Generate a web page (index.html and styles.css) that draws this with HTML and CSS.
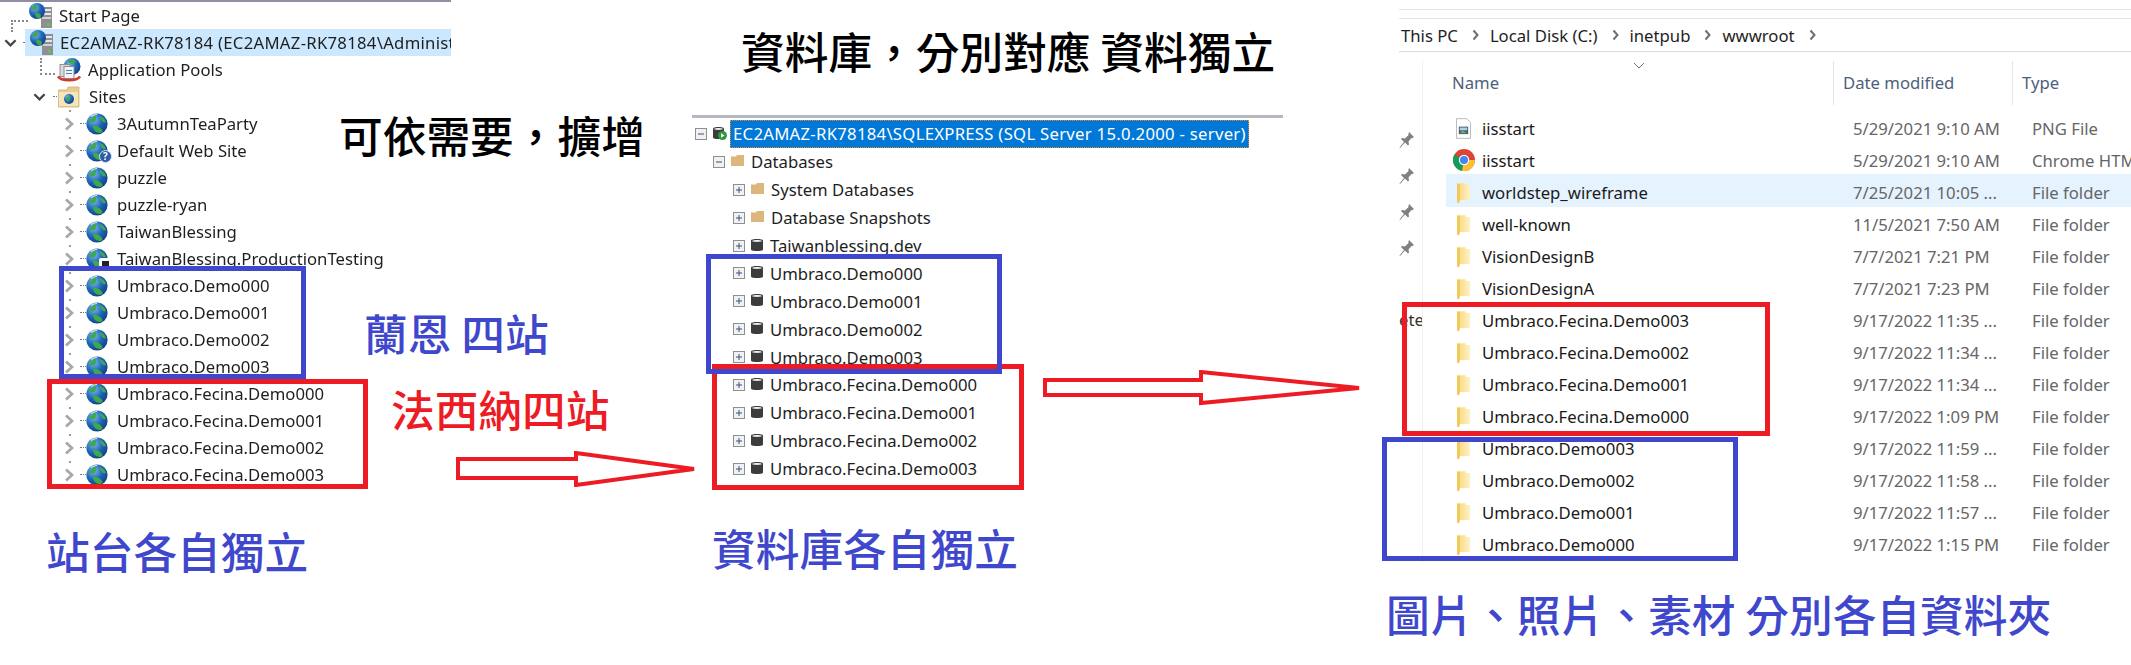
FILE: index.html
```html
<!DOCTYPE html>
<html lang="zh-Hant">
<head>
<meta charset="utf-8">
<title>Umbraco sites</title>
<link rel="stylesheet" href="styles.css">
</head>
<body>
<svg class="defs" width="0" height="0" aria-hidden="true">
  <defs>
    <radialGradient id="gb" cx="35%" cy="30%" r="75%"><stop offset="0" stop-color="#7db8ea"/><stop offset=".55" stop-color="#1c66b8"/><stop offset="1" stop-color="#123f86"/></radialGradient>
    <linearGradient id="fy" x1="0" x2="1"><stop offset="0" stop-color="#f8d67a"/><stop offset="1" stop-color="#fff2c4"/></linearGradient>
    <symbol id="globe" viewBox="0 0 22 22">
      <circle cx="11" cy="11" r="10.6" fill="url(#gb)"/>
      <path d="M3 7c3-1 4-4 7-5 1 2-1 3 0 5-1 2-3 3-4 2-1 1-2 0-3-2zM14 3c3 1 5 3 6 6-2 1-3 0-4-1-1-2-3-3-2-5zM7 13c3-1 7 1 9 4 1 1 0 3-2 3-4 0-7-3-7-7z" fill="#3ea84a"/>
      <path d="M5 3.5C7 2 9 1.500 11 1.500" stroke="#cfe6f8" stroke-width="1.200" fill="none"/>
    </symbol>
    <symbol id="server" viewBox="0 0 24 27">
      <rect x="13" y="5" width="11" height="21" fill="#8d8f93"/>
      <rect x="14" y="7" width="9" height="2" fill="#e5e6e8"/><rect x="14" y="11" width="9" height="2" fill="#e5e6e8"/><rect x="14" y="15" width="9" height="2" fill="#d0d2d4"/>
      <rect x="19" y="21" width="3" height="3" fill="#6cc04a"/>
      <circle cx="9" cy="9" r="8" fill="url(#gb)"/>
      <path d="M3 6c2-1 3-3 5-4 1 2 0 3 1 4-1 2-3 2-3 2-1 0-2-1-3-2zM7 11c3-1 6 1 6 3s-3 3-4 2c-1-1-2-3-2-5z" fill="#3ea84a"/>
    </symbol>
    <symbol id="pools" viewBox="0 0 24 24">
      <circle cx="15" cy="9" r="8.500" fill="url(#gb)"/>
      <path d="M11 3c3-2 6-1 8 1-1 2-4 3-5 2-2 0-3-1-3-3z" fill="#3ea84a"/>
      <rect x="3" y="7" width="10" height="12" fill="#d9dce2" stroke="#8c8f96"/>
      <rect x="7" y="9" width="10" height="12" fill="#f3f4f6" stroke="#8c8f96"/>
      <path d="M9 13h6M9 16h6" stroke="#4e7fb5"/>
      <path d="M1 19c3 5 19 5 22 0" fill="none" stroke="#d2392b" stroke-width="2.500"/>
    </symbol>
    <symbol id="sites" viewBox="0 0 22 22">
      <path d="M0 4h9l1-3h11v20H0z" fill="#e9cc8f" stroke="#cdb27a" stroke-width=".8"/>
      <rect x="1" y="6" width="19" height="14" fill="#f5e5bd"/>
      <circle cx="11" cy="13" r="5" fill="url(#gb)"/>
      <path d="M8 12c2-1 3-2 4-3 1 2 0 3-1 3 1 2 0 4-1 4-1-1-2-2-2-4z" fill="#3ea84a"/>
    </symbol>
    <symbol id="open" viewBox="0 0 14 10"><path d="M1.500 2l5.500 5.500L12.500 2" fill="none" stroke="#444" stroke-width="2.400"/></symbol>
    <symbol id="closed" viewBox="0 0 10 14"><path d="M2 1.500L8 7l-6 5.500" fill="none" stroke="#a8a8a8" stroke-width="2.800"/></symbol>
    <symbol id="crumbchev" viewBox="0 0 7 12"><path d="M1.500 1.500L5.500 6l-4 4.500" fill="none" stroke="#6f6f6f" stroke-width="2"/></symbol>
    <symbol id="plus" viewBox="0 0 12 12"><rect x=".5" y=".5" width="11" height="11" fill="#f1f1f1" stroke="#8e8f8f"/><path d="M3 6h6M6 3v6" stroke="#3d4f80"/></symbol>
    <symbol id="minus" viewBox="0 0 12 12"><rect x=".5" y=".5" width="11" height="11" fill="#f1f1f1" stroke="#8e8f8f"/><path d="M3 6h6" stroke="#3d4f80"/></symbol>
    <symbol id="db" viewBox="0 0 12 14"><path d="M0 2.500C0 .5 12 .5 12 2.500v9c0 2-12 2-12 0z" fill="#3c3c3c"/><path d="M1 3c2 1.200 8 1.200 10 0-2-1.300-8-1.300-10 0z" fill="#efefef"/></symbol>
    <symbol id="dbrun" viewBox="0 0 14 14"><path d="M0 2.500C0 .5 11 .5 11 2.500v9c0 2-11 2-11 0z" fill="#3c3c3c"/><path d="M1 3c2 1.200 7 1.200 9 0-2-1.300-7-1.300-9 0z" fill="#efefef"/><circle cx="9.500" cy="9.500" r="4.500" fill="#2d9a37"/><path d="M8 7.200l3.500 2.300-3.500 2.300z" fill="#fff"/></symbol>
    <symbol id="tan" viewBox="0 0 13 11"><path d="M0 1.500h5l1-1.500h7v11H0z" fill="#dcb67a"/></symbol>
    <symbol id="yf" viewBox="0 0 15 21"><path d="M1 1.500L9 1l1 2h4v15H4l-1 3H1z" fill="url(#fy)"/><path d="M1 1.500V21h2l1-3V2z" fill="#f2c95c"/></symbol>
    <symbol id="png" viewBox="0 0 16 22"><path d="M.5.500h11l4 4v17H.5z" fill="#fff" stroke="#b5b5b5"/><rect x="3" y="9" width="10" height="8" fill="#4b5a6e"/><rect x="4" y="10" width="8" height="3" fill="#a8d0ec"/><path d="M4 16l3-3 5 3z" fill="#7ea55f"/></symbol>
    <symbol id="chrome" viewBox="0 0 22 22">
      <circle cx="11" cy="11" r="11" fill="#db4437"/>
      <path d="M11 11L1.500 5.500A11 11 0 0 0 11 22L16.500 11z" fill="#0f9d58"/>
      <path d="M11 11h11A11 11 0 0 1 9 21.800z" fill="#fbc02d"/>
      <circle cx="11" cy="11" r="5.200" fill="#fff"/><circle cx="11" cy="11" r="4" fill="#4285f4"/>
    </symbol>
    <symbol id="pin" viewBox="0 0 16 18"><path d="M10 1l5 5-1.500 1-1 0-3 3.500.5 3-1 1-3-3L1 17l-.5-.5 4.500-5.500-3-3 1-1 3 .5L9.500 4V2.500z" fill="#808080"/></symbol>
  </defs>
</svg>

<main class="canvas">
  <section class="iis">
    <div class="row lv0-start"><svg class="ic-lg"><use href="#server"/></svg><span>Start Page</span></div>
    <div class="row lv0">
      <svg class="chev-open"><use href="#open"/></svg><i class="conn conn-root"></i>
      <div class="sel-row"><svg class="ic-lg"><use href="#server"/></svg><span class="caps">EC2AMAZ-RK78184 (EC2AMAZ-RK78184\Administrator)</span></div>
    </div>
    <div class="row lv1-pool"><svg class="ic-lg"><use href="#pools"/></svg><span>Application Pools</span></div>
    <div class="row lv1">
      <svg class="chev-open"><use href="#open"/></svg><i class="conn conn-sites"></i>
      <svg class="ic-md"><use href="#sites"/></svg><span>Sites</span>
    </div>
    <div class="row lv2"><svg class="chev"><use href="#closed"/></svg><i class="conn"></i><svg class="ic-md"><use href="#globe"/></svg><span>3AutumnTeaParty</span></div>
    <div class="row lv2"><svg class="chev"><use href="#closed"/></svg><i class="conn"></i><span class="badged"><svg class="ic-md"><use href="#globe"/></svg><b class="badge badge-q">?</b></span><span>Default Web Site</span></div>
    <div class="row lv2"><svg class="chev"><use href="#closed"/></svg><i class="conn"></i><svg class="ic-md"><use href="#globe"/></svg><span>puzzle</span></div>
    <div class="row lv2"><svg class="chev"><use href="#closed"/></svg><i class="conn"></i><svg class="ic-md"><use href="#globe"/></svg><span>puzzle-ryan</span></div>
    <div class="row lv2"><svg class="chev"><use href="#closed"/></svg><i class="conn"></i><svg class="ic-md"><use href="#globe"/></svg><span>TaiwanBlessing</span></div>
    <div class="row lv2"><svg class="chev"><use href="#closed"/></svg><i class="conn"></i><span class="badged"><svg class="ic-md"><use href="#globe"/></svg><b class="badge badge-stop"></b></span><span>TaiwanBlessing.ProductionTesting</span></div>
    <div class="row lv2"><svg class="chev"><use href="#closed"/></svg><i class="conn"></i><svg class="ic-md"><use href="#globe"/></svg><span>Umbraco.Demo000</span></div>
    <div class="row lv2"><svg class="chev"><use href="#closed"/></svg><i class="conn"></i><svg class="ic-md"><use href="#globe"/></svg><span>Umbraco.Demo001</span></div>
    <div class="row lv2"><svg class="chev"><use href="#closed"/></svg><i class="conn"></i><svg class="ic-md"><use href="#globe"/></svg><span>Umbraco.Demo002</span></div>
    <div class="row lv2"><svg class="chev"><use href="#closed"/></svg><i class="conn"></i><svg class="ic-md"><use href="#globe"/></svg><span>Umbraco.Demo003</span></div>
    <div class="row lv2"><svg class="chev"><use href="#closed"/></svg><i class="conn"></i><svg class="ic-md"><use href="#globe"/></svg><span>Umbraco.Fecina.Demo000</span></div>
    <div class="row lv2"><svg class="chev"><use href="#closed"/></svg><i class="conn"></i><svg class="ic-md"><use href="#globe"/></svg><span>Umbraco.Fecina.Demo001</span></div>
    <div class="row lv2"><svg class="chev"><use href="#closed"/></svg><i class="conn"></i><svg class="ic-md"><use href="#globe"/></svg><span>Umbraco.Fecina.Demo002</span></div>
    <div class="row lv2"><svg class="chev"><use href="#closed"/></svg><i class="conn"></i><svg class="ic-md"><use href="#globe"/></svg><span>Umbraco.Fecina.Demo003</span></div>
    <i class="elbow elbow-start"></i>
    <i class="elbow elbow-root"></i>
  </section>

  <section class="sql">
    <div class="srow s0"><svg class="box"><use href="#minus"/></svg><svg class="ic-run"><use href="#dbrun"/></svg><span class="sql-sel">EC2AMAZ-RK78184\SQLEXPRESS (SQL Server 15.0.2000 - server)</span></div>
    <div class="srow s1"><svg class="box"><use href="#minus"/></svg><svg class="ic-tan"><use href="#tan"/></svg><span>Databases</span></div>
    <div class="srow s2"><svg class="box"><use href="#plus"/></svg><svg class="ic-tan"><use href="#tan"/></svg><span>System Databases</span></div>
    <div class="srow s2"><svg class="box"><use href="#plus"/></svg><svg class="ic-tan"><use href="#tan"/></svg><span>Database Snapshots</span></div>
    <div class="srow s2"><svg class="box"><use href="#plus"/></svg><svg class="ic-db"><use href="#db"/></svg><span>Taiwanblessing.dev</span></div>
    <div class="srow s2"><svg class="box"><use href="#plus"/></svg><svg class="ic-db"><use href="#db"/></svg><span>Umbraco.Demo000</span></div>
    <div class="srow s2"><svg class="box"><use href="#plus"/></svg><svg class="ic-db"><use href="#db"/></svg><span>Umbraco.Demo001</span></div>
    <div class="srow s2"><svg class="box"><use href="#plus"/></svg><svg class="ic-db"><use href="#db"/></svg><span>Umbraco.Demo002</span></div>
    <div class="srow s2"><svg class="box"><use href="#plus"/></svg><svg class="ic-db"><use href="#db"/></svg><span>Umbraco.Demo003</span></div>
    <div class="srow s2"><svg class="box"><use href="#plus"/></svg><svg class="ic-db"><use href="#db"/></svg><span>Umbraco.Fecina.Demo000</span></div>
    <div class="srow s2"><svg class="box"><use href="#plus"/></svg><svg class="ic-db"><use href="#db"/></svg><span>Umbraco.Fecina.Demo001</span></div>
    <div class="srow s2"><svg class="box"><use href="#plus"/></svg><svg class="ic-db"><use href="#db"/></svg><span>Umbraco.Fecina.Demo002</span></div>
    <div class="srow s2"><svg class="box"><use href="#plus"/></svg><svg class="ic-db"><use href="#db"/></svg><span>Umbraco.Fecina.Demo003</span></div>
  </section>

  <section class="explorer">
    <div class="crumbs">
      <span class="crumb">This PC</span><svg class="sep"><use href="#crumbchev"/></svg>
      <span class="crumb">Local Disk (C:)</span><svg class="sep"><use href="#crumbchev"/></svg>
      <span class="crumb">inetpub</span><svg class="sep"><use href="#crumbchev"/></svg>
      <span class="crumb">wwwroot</span><svg class="sep"><use href="#crumbchev"/></svg>
    </div>
    <div class="pane">
      <aside class="quick">
        <svg class="pin"><use href="#pin"/></svg>
        <svg class="pin"><use href="#pin"/></svg>
        <svg class="pin"><use href="#pin"/></svg>
        <svg class="pin"><use href="#pin"/></svg>
        <span class="cut">ete</span>
      </aside>
      <div class="files">
        <div class="head">
          <span class="h-name">Name<svg class="sort" viewBox="0 0 12 7"><path d="M1 1l5 5 5-5" fill="none" stroke="#777"/></svg></span>
          <span class="h-col">Date modified</span>
          <span class="h-col">Type</span>
        </div>
        <div class="frow"><svg class="f-ic"><use href="#png"/></svg><span class="f-name">iisstart</span><span class="f-meta">5/29/2021 9:10 AM</span><span class="f-meta">PNG File</span></div>
        <div class="frow"><svg class="f-ic f-chrome"><use href="#chrome"/></svg><span class="f-name">iisstart</span><span class="f-meta">5/29/2021 9:10 AM</span><span class="f-meta">Chrome HTML Document</span></div>
        <div class="frow is-hover"><svg class="f-ic"><use href="#yf"/></svg><span class="f-name">worldstep_wireframe</span><span class="f-meta">7/25/2021 10:05 ...</span><span class="f-meta">File folder</span></div>
        <div class="frow"><svg class="f-ic"><use href="#yf"/></svg><span class="f-name">well-known</span><span class="f-meta">11/5/2021 7:50 AM</span><span class="f-meta">File folder</span></div>
        <div class="frow"><svg class="f-ic"><use href="#yf"/></svg><span class="f-name">VisionDesignB</span><span class="f-meta">7/7/2021 7:21 PM</span><span class="f-meta">File folder</span></div>
        <div class="frow"><svg class="f-ic"><use href="#yf"/></svg><span class="f-name">VisionDesignA</span><span class="f-meta">7/7/2021 7:23 PM</span><span class="f-meta">File folder</span></div>
        <div class="frow"><svg class="f-ic"><use href="#yf"/></svg><span class="f-name">Umbraco.Fecina.Demo003</span><span class="f-meta">9/17/2022 11:35 ...</span><span class="f-meta">File folder</span></div>
        <div class="frow"><svg class="f-ic"><use href="#yf"/></svg><span class="f-name">Umbraco.Fecina.Demo002</span><span class="f-meta">9/17/2022 11:34 ...</span><span class="f-meta">File folder</span></div>
        <div class="frow"><svg class="f-ic"><use href="#yf"/></svg><span class="f-name">Umbraco.Fecina.Demo001</span><span class="f-meta">9/17/2022 11:34 ...</span><span class="f-meta">File folder</span></div>
        <div class="frow"><svg class="f-ic"><use href="#yf"/></svg><span class="f-name">Umbraco.Fecina.Demo000</span><span class="f-meta">9/17/2022 1:09 PM</span><span class="f-meta">File folder</span></div>
        <div class="frow"><svg class="f-ic"><use href="#yf"/></svg><span class="f-name">Umbraco.Demo003</span><span class="f-meta">9/17/2022 11:59 ...</span><span class="f-meta">File folder</span></div>
        <div class="frow"><svg class="f-ic"><use href="#yf"/></svg><span class="f-name">Umbraco.Demo002</span><span class="f-meta">9/17/2022 11:58 ...</span><span class="f-meta">File folder</span></div>
        <div class="frow"><svg class="f-ic"><use href="#yf"/></svg><span class="f-name">Umbraco.Demo001</span><span class="f-meta">9/17/2022 11:57 ...</span><span class="f-meta">File folder</span></div>
        <div class="frow"><svg class="f-ic"><use href="#yf"/></svg><span class="f-name">Umbraco.Demo000</span><span class="f-meta">9/17/2022 1:15 PM</span><span class="f-meta">File folder</span></div>
      </div>
    </div>
  </section>

  <div class="mark red m1"></div>
  <div class="mark blue m2"></div>
  <div class="mark red m3"></div>
  <div class="mark blue m4"></div>
  <div class="mark red m5"></div>
  <div class="mark blue m6"></div>

  <svg class="arrow a1" viewBox="0 0 242 36"><path d="M2 8H120V2L238 18 120 34V27H2z" fill="none" stroke="#ed1c24" stroke-width="4"/></svg>
  <svg class="arrow a2" viewBox="0 0 320 36"><path d="M2 10H158V2L316 18 158 33V25H2z" fill="none" stroke="#ed1c24" stroke-width="4"/></svg>

  <p class="note black n1">可依需要，擴增</p>
  <p class="note black n2">資料庫，分別對應 資料獨立</p>
  <p class="note indigo n3">蘭恩 四站</p>
  <p class="note crimson n4">法西納四站</p>
  <p class="note indigo n5">站台各自獨立</p>
  <p class="note indigo n6">資料庫各自獨立</p>
  <p class="note indigo n7">圖片、照片、素材 分別各自資料夾</p>
</main>
</body>
</html>
```
FILE: styles.css
```css
* { box-sizing: border-box; }
html, body { margin: 0; padding: 0; background: #fff; overflow: hidden; }
.defs { position: absolute; }
.canvas {
  position: relative;
  width: 2131px;
  height: 665px;
  overflow: hidden;
  background: #fff;
  font-family: "Noto Sans", "Open Sans", sans-serif;
  font-size: 16.7px;
  color: #1e1e1e;
}
svg { display: block; flex: none; }

/* IIS tree */
.iis {
  position: absolute;
  left: 0;
  top: 0;
  width: 451px;
  border-top: 2px solid #8f8fa6;
  overflow: hidden;
  filter: blur(.3px);
}
.row {
  position: relative;
  display: flex;
  align-items: center;
  height: 27px;
  white-space: nowrap;
}
.row span { line-height: 27px; }
.caps { letter-spacing: .28px; }
.lv0-start { padding-left: 28px; gap: 7px; }
.lv0 { padding-left: 4px; }
.lv1-pool { padding-left: 57px; gap: 7px; }
.lv1 { padding-left: 33px; }
.lv2 { padding-left: 64px; }
.lv2::before {
  content: "";
  position: absolute;
  left: 69px;
  top: 0;
  width: 2px;
  height: 2px;
  background: #999;
}
.chev-open { width: 13px; height: 10px; }
.chev { width: 10px; height: 14px; }
.conn { display: block; width: 6px; margin-left: 6px; border-top: 1px dotted #777; flex: none; }
.conn-root { width: 2px; margin-left: 6px; }
.conn-sites { width: 4px; margin-left: 7px; margin-right: 1px; }
.ic-lg { width: 24px; height: 27px; }
.ic-md { width: 22px; height: 22px; margin-right: 9px; }
.sel-row {
  display: flex;
  align-items: center;
  gap: 7px;
  flex: 1;
  height: 27px;
  padding-left: 4px;
  background: #cce8ff;
  margin-left: 0;
}
.badged { position: relative; display: block; width: 31px; height: 22px; flex: none; }
.badge {
  position: absolute;
  left: 13px;
  top: 10px;
  width: 13px;
  height: 13px;
  border-radius: 50%;
}
.badge-q {
  background: #2c5ea8;
  border: 1px solid #d8e4f5;
  color: #fff;
  font-size: 10px;
  line-height: 11px;
  text-align: center;
}
.badge-stop { background: #fff; border: 3px solid #fff; box-shadow: inset 0 0 0 4px #222; border-radius: 2px; }
.elbow { position: absolute; display: block; border-left: 2px dotted #888; border-top: 2px dotted #888; }
.elbow-start { left: 11px; top: 18px; width: 17px; height: 12px; }
.elbow-root { left: 40px; top: 56px; width: 15px; border-top: 0; border-bottom: 2px dotted #888; height: 17px; }

/* SQL tree */
.sql {
  position: absolute;
  left: 692px;
  top: 115px;
  width: 591px;
  padding-top: 2px;
  border-top: 3px solid #b4b8c0;
}
.srow {
  display: flex;
  align-items: center;
  height: 27.9px;
  white-space: nowrap;
}
.s0 { padding-left: 3px; }
.s1 { padding-left: 21px; }
.s2 { padding-left: 41px; }
.box { width: 12px; height: 12px; margin-right: 6px; }
.ic-tan { width: 13px; height: 11px; margin-right: 7px; margin-top: -3px; }
.ic-db { width: 12px; height: 14px; margin-right: 7px; margin-top: -2px; }
.ic-run { width: 14px; height: 14px; margin-right: 3px; margin-top: -2px; }
.sql-sel {
  padding: 0 3px;
  height: 28px;
  line-height: 28px;
  letter-spacing: .28px;
  color: #fff;
  background: #0078d7;
  outline: 1px dotted #f08a24;
  outline-offset: -1px;
}

/* Explorer */
.explorer {
  position: absolute;
  left: 1399px;
  top: 9px;
  right: 0;
  border-top: 1px solid #e5e5e5;
  padding-top: 8px;
}
.crumbs {
  display: flex;
  align-items: center;
  height: 34px;
  border-top: 1px solid #e5e5e5;
  border-bottom: 1px solid #dcdcdc;
  padding-left: 2px;
  white-space: nowrap;
}
.sep { width: 7px; height: 12px; margin: 0 11px 0 14px; }
.pane { display: flex; margin-top: 9px; }
.quick {
  position: relative;
  flex: none;
  width: 24px;
  height: 502px;
  padding-top: 70px;
  border-right: 1px solid #f0f0f0;
  display: flex;
  flex-direction: column;
  gap: 18px;
}
.pin { width: 16px; height: 18px; }
.cut { margin-top: 34px; color: #333; line-height: 22px; overflow: hidden; width: 23px; }
.files { flex: 1; min-width: 0; padding-left: 23px; }
.head {
  display: grid;
  grid-template-columns: 387px 179px 1fr;
  height: 41px;
  margin-bottom: 10px;
  color: #4c607a;
}
.head span { position: relative; display: block; line-height: 44px; padding-left: 6px; white-space: nowrap; }
.head .h-col { border-left: 1px solid #e5e5e5; padding-left: 9px; }
.sort { position: absolute; left: 187px; top: 1px; width: 12px; height: 7px; }
.frow {
  display: grid;
  grid-template-columns: 26px 361px 179px 1fr;
  align-items: center;
  height: 32px;
  padding-left: 10px;
  white-space: nowrap;
  overflow: hidden;
}
.is-hover { background: #e5f3ff; margin: -2px 0 1px; height: 33px; padding-top: 3px; }
.f-ic { width: 15px; height: 21px; }
.f-chrome { width: 22px; height: 22px; margin-left: -3px; }
.f-name { color: #1a1a1a; }
.f-meta { color: #666; padding-left: 10px; }

/* Markup drawn on top */
.mark { position: absolute; border: 5px solid; }
.red { border-color: #ed1c24; }
.blue { border-color: #3f48cc; }
.m1 { left: 47px; top: 379px; width: 321px; height: 110px; }
.m2 { left: 59px; top: 266px; width: 247px; height: 113px; }
.m3 { left: 712px; top: 364px; width: 312px; height: 126px; }
.m4 { left: 706px; top: 254px; width: 296px; height: 120px; }
.m5 { left: 1402px; top: 302px; width: 368px; height: 134px; }
.m6 { left: 1382px; top: 437px; width: 356px; height: 124px; }
.arrow { position: absolute; }
.a1 { left: 456px; top: 451px; width: 242px; height: 36px; }
.a2 { left: 1043px; top: 370px; width: 320px; height: 36px; }
.note {
  position: absolute;
  margin: 0;
  font-family: "Noto Sans CJK TC", "Noto Sans CJK SC", sans-serif;
  font-size: 43.7px;
  font-weight: 500;
  line-height: 44px;
  white-space: nowrap;
}
.black { color: #000; }
.indigo { color: #3f48cc; }
.crimson { color: #ed1c24; }
.n1 { left: 339px; top: 112px; }
.n2 { left: 741px; top: 28px; }
.n3 { left: 364px; top: 310px; }
.n4 { left: 391px; top: 386px; }
.n5 { left: 46px; top: 528px; }
.n6 { left: 712px; top: 525px; }
.n7 { left: 1386px; top: 591px; }
```
